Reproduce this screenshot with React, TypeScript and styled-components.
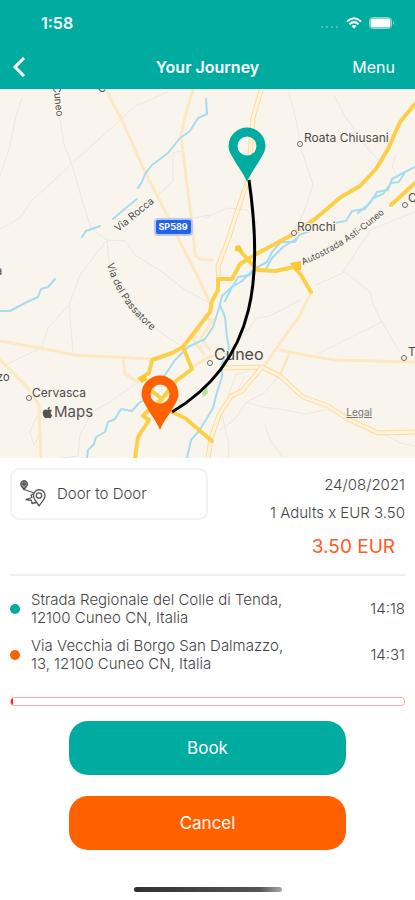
import React from "react";
import styled, { createGlobalStyle } from "styled-components";
import { FaApple } from "react-icons/fa";

const TEAL = "#00ac9f";
const ORANGE = "#ff6000";

const GlobalStyle = createGlobalStyle`
  *, *::before, *::after { box-sizing: border-box; }
  body {
    margin: 0;
    background: #fff;
    color: #444;
    font-family: Inter, "Liberation Sans", sans-serif;
  }
  button { font: inherit; border: 0; cursor: pointer; }
`;

const Screen = styled.div`
  display: flex;
  flex-direction: column;
  min-height: 100vh;
`;

const Header = styled.header`
  background: ${TEAL};
  color: #fff;
`;

const StatusBar = styled.div`
  display: flex;
  align-items: center;
  justify-content: space-between;
  height: 45px;
  padding: 0 20px 0 41px;
`;

const Clock = styled.time`
  font-size: 16px;
  line-height: 20px;
  font-weight: 600;
`;

const StatusIcons = styled.div`
  display: flex;
  align-items: center;
  gap: 7px;
`;

const NavBar = styled.nav`
  display: grid;
  grid-template-columns: 1fr auto 1fr;
  align-items: center;
  height: 44px;
  padding: 0 12px;
`;

const Title = styled.h1`
  margin: 0;
  font-size: 16px;
  line-height: 24px;
  font-weight: 600;
`;

const NavButton = styled.button<{ $end?: boolean }>`
  display: flex;
  justify-self: ${(p) => (p.$end ? "end" : "start")};
  padding: ${(p) => (p.$end ? "0 8px" : "0")};
  background: none;
  color: #fff;
  font-size: 16px;
  line-height: 24px;
`;

const MapArea = styled.section`
  position: relative;
  display: flex;
  flex: 1 0 320px;
  overflow: hidden;
  background: #f9f5ed;
`;

const MapCanvas = styled.svg`
  position: absolute;
  inset: 0;
  width: 100%;
  height: 100%;

  text {
    font-family: Inter, "Liberation Sans", sans-serif;
    fill: #4c4a48;
    stroke: #f9f5ed;
    stroke-width: 2px;
    paint-order: stroke;
  }
`;

const MapBrand = styled.div`
  position: absolute;
  left: 41px;
  bottom: 37px;
  display: flex;
  align-items: center;
  font-size: 15px;
  line-height: 18px;
  color: #555350;
`;

const LegalLink = styled.a`
  position: absolute;
  right: 43px;
  bottom: 40px;
  font-size: 10px;
  line-height: 12px;
  color: #777470;
`;

const Details = styled.main`
  display: flex;
  flex-direction: column;
  padding: 10px 10px 0;
`;

const Summary = styled.div`
  display: grid;
  grid-template-columns: 1fr 1fr;
  align-items: start;
  padding-bottom: 13px;
  border-bottom: 2px solid #efefef;
`;

const ServiceCard = styled.div`
  display: flex;
  align-items: center;
  gap: 10px;
  height: 52px;
  padding: 0 8px;
  border: 2px solid #f2f2f2;
  border-radius: 9px;
  font-size: 15px;
  line-height: 20px;
  font-weight: 300;
`;

const Fare = styled.div`
  display: flex;
  flex-direction: column;
  align-items: flex-end;
  padding-top: 3px;
  font-size: 15px;
  line-height: 28px;
  font-weight: 300;
`;

const Price = styled.strong`
  margin-top: 6px;
  padding-right: 10px;
  font-size: 19px;
  line-height: 28px;
  font-weight: 400;
  color: #ff5a1f;
`;

const Stops = styled.ul`
  display: flex;
  flex-direction: column;
  gap: 10px;
  margin: 0;
  padding: 15px 0 0;
  list-style: none;
`;

const Stop = styled.li`
  display: grid;
  grid-template-columns: 11px 1fr auto;
  align-items: center;
  gap: 10px;
  font-size: 15px;
  line-height: 18px;
  font-weight: 300;
`;

const Dot = styled.span<{ $color: string }>`
  width: 10px;
  height: 10px;
  border-radius: 50%;
  background: ${(p) => p.$color};
`;

const Track = styled.div`
  height: 9px;
  margin-top: 24px;
  border: 1px solid #ffa9a2;
  border-radius: 4px;
  overflow: hidden;
`;

const Fill = styled.div`
  width: 2px;
  height: 100%;
  background: #f0281e;
`;

const Actions = styled.div`
  display: flex;
  flex-direction: column;
  align-items: center;
  gap: 21px;
  padding-top: 15px;
`;

const ActionButton = styled.button<{ $color: string }>`
  width: 70%;
  height: 54px;
  border-radius: 19px;
  background: ${(p) => p.$color};
  color: #fff;
  font-size: 17px;
  line-height: 24px;
`;

const HomeIndicator = styled.div`
  align-self: center;
  width: 148px;
  height: 5px;
  margin: 37px 0 8px;
  border-radius: 3px;
  background: linear-gradient(90deg, #303030, #555 85%, #aaa);
`;

const Road = styled.path<{ $kind: "lane" | "pale" | "main" | "water" }>`
  fill: none;
  stroke-linejoin: round;
  stroke-linecap: round;
  stroke: ${(p) => ({ lane: "#ebe7e1", pale: "#fce8c2", main: "#fbd048", water: "#a5dcf0" })[p.$kind]};
  stroke-width: ${(p) => ({ lane: 1, pale: 3, main: 4, water: 2 })[p.$kind]};
`;

const lanes = [
  "M22 98 L16 116 L10 145 L0 176",
  "M59 113 L64 144 L73 168 L82 200 L91 228 L107 240 L110 270",
  "M168 92 L135 106 L118 122 L70 165 L60 175 L32 200 L20 218 L0 229",
  "M107 240 L80 275 L69 305 L73 351 M69 305 L48 328 L41 348 L5 365",
  "M107 240 L125 241 L135 255 L162 272 L185 290 L210 303",
  "M181 151 L173 153 L173 181 L159 194 M193 218 L210 215",
  "M289 92 L296 120 L302 152 L313 185 L303 214 L290 235",
  "M335 97 L344 115 L365 145 L378 160 M396 155 L392 166 L398 178",
  "M205 218 L228 208 L247 210 L257 224",
  "M415 212 L370 230 L355 254 L343 272",
  "M300 300 L270 316 L257 318 L240 340 L222 356",
  "M316 285 L345 272 L370 292 L374 307 L382 322 L400 352",
  "M382 322 L355 335 L317 354",
  "M220 430 L234 420 L247 402 L262 407 L280 409 L305 414 L325 410",
  "M247 402 L264 393 L278 377 M234 398 L245 376 M265 425 L270 440 L282 456",
  "M222 415 L229 445 L228 458 M385 434 L400 443 L415 446",
  "M123 365 L127 376 L138 383 M150 325 L178 344",
  "M135 384 L110 402 L92 412 L80 435 L78 456 L62 458",
  "M38 414 L30 432 L34 445 L41 432",
  "M218 425 L236 374 L250 371",
];

const paleRoads = [
  "M107 92 L122 120 L145 172 L168 217 L180 242 L197 275 L210 303",
  "M193 90 L186 113 L181 135 L187 185 L193 230 L195 255 L200 259 L212 260",
  "M0 341 L40 348 L75 355 L150 359",
  "M0 360 L28 388 L39 405 L41 458",
  "M311 292 L300 315 L280 343 L262 369",
  "M280 350 L310 356 L335 360 L415 362 M289 354 L280 375",
  "M123 360 L125 374 L138 382",
  "M206 315 L193 340 L204 354 M204 318 L213 320 L201 338 L210 350 M192 368 L205 359 L222 352",
];

const casedRoads = [
  "M261 90 L253 118 L248 180 L237 212 L228 240 L218 266 L219 279",
  "M219 368 L262 367 L280 376 L303 397 L328 406 L348 419 L378 433 L415 432",
  "M262 367 L242 391 L231 396 L219 415 L211 438 L208 458",
];

const mainRoads = [
  "M415 104 L400 122 L388 149 L376 169 L360 186 L341 197 L315 219 L290 236 L258 253 L240 264 L232 279 L218 279 L218 290 L212 301 L210 312 L183 347 L172 353 L152 360 L149 373 L141 378",
  "M415 183 L391 205",
  "M238 248 L248 260 L258 270 L275 271 L294 267 L301 275 L311 292",
  "M183 347 L192 369 L176 381 L162 399 L148 411 L143 416 L149 420 L138 437 L135 458",
  "M148 388 L162 399 M172 412 L185 418 L212 441",
];

const rivers = [
  "M206 99 L207 114 L198 118 L190 131 L180 138 L168 153 L152 165 L145 174 L142 182 L138 188",
  "M137 199 L127 207 L113 219 M82 237 L86 231 L100 226",
  "M0 311 L10 311 L25 303 L38 297 L41 289 L48 287 L55 279",
  "M415 167 L405 172 L399 182 L391 183 L383 194 L373 198 L365 209 L352 211 L346 221 L334 223",
  "M405 172 L392 179 L388 190 L377 192 L370 203 L358 213",
  "M310 231 L299 235 L295 242 L281 242 L272 252 L267 262 L256 268 L250 275 L238 277 L233 286 L222 296 L219 308 L213 327 L205 339 L188 347 L175 360 L165 375 L156 384 L148 398 L139 403 L132 411 L121 409 L115 419 L108 422 L105 432 L96 437 L94 444 L88 450 L87 458",
  "M296 239 L283 247 L272 258 L266 269 L252 271 L242 281 L232 287 L225 301",
  "M220 305 L225 317 L227 337 L229 348 L222 364 L222 377 L217 392 L213 408 L207 418 L199 431 L191 440 L187 458",
];

const places = [
  { x: 300, y: 144, label: "Roata Chiusani", tx: 304, ty: 142, size: 12 },
  { x: 294, y: 233, label: "Ronchi", tx: 297, ty: 231, size: 12 },
  { x: 405, y: 205, label: "C", tx: 408, ty: 202, size: 12 },
  { x: 404, y: 358, label: "T", tx: 408, ty: 356, size: 12 },
  { x: 29, y: 398, label: "Cervasca", tx: 32, ty: 397, size: 12 },
  { x: 210, y: 363, label: "Cuneo", tx: 214, ty: 360, size: 16 },
];

function Pin({ x, y, color }: { x: number; y: number; color: string }) {
  return (
    <path
      transform={`translate(${x} ${y})`}
      fill={color}
      fillRule="evenodd"
      d="M0 36 C-3 28 -9 21 -14 12 C-17 7 -18.500 4 -18.500 0 A18.500 18.500 0 0 1 18.500 0 C18.500 4 17 7 14 12 C9 21 3 28 0 36 Z M0 -9.500 A9.500 9.500 0 1 0 0 9.500 A9.500 9.500 0 1 0 0 -9.500 Z"
    />
  );
}

function JourneyMap() {
  return (
    <MapCanvas viewBox="0 89 415 369" preserveAspectRatio="xMidYMid slice" role="img" aria-label="Route map of Cuneo">
      {lanes.map((d) => <Road key={d} $kind="lane" d={d} />)}
      {paleRoads.map((d) => <Road key={d} $kind="pale" d={d} />)}
      {casedRoads.map((d) => (
        <g key={d} fill="none" strokeLinejoin="round">
          <path d={d} stroke="#fadba0" strokeWidth="5" />
          <path d={d} stroke="#fdf3dc" strokeWidth="3" />
        </g>
      ))}
      <path d="M202 393 L207 386 L208 393 L203 397 Z" fill="#b9e0a0" />
      {rivers.map((d) => <Road key={d} $kind="water" d={d} />)}
      {mainRoads.map((d) => <Road key={d} $kind="main" d={d} />)}
      <path d="M137 378 L146 375 L147 380 L142 383 Z M235 246 L240 245 L243 252 L235 251 Z M290 263 L301 261 L301 270 L294 270 Z" fill="#fbc92f" />

      {places.map((p) => (
        <g key={p.label}>
          <circle cx={p.x} cy={p.y} r="2.500" fill="#f9f5ed" stroke="#6d6b68" />
          <text x={p.tx} y={p.ty} fontSize={p.size}>{p.label}</text>
        </g>
      ))}
      <text x="-3" y="381" fontSize="11">zo</text>
      <text x="-4" y="275" fontSize="11">a</text>
      <text x="98" y="92" fontSize="11">C</text>
      <text fontSize="10" transform="translate(53 86) rotate(83)">Cuneo</text>
      <text fontSize="10" transform="translate(118 232) rotate(-39)">Via Rocca</text>
      <path id="passatore" d="M107 264 Q116 300 150 329" fill="none" />
      <text fontSize="10"><textPath href="#passatore">Via del Passatore</textPath></text>
      <path id="autostrada" d="M303 265 Q355 244 398 200" fill="none" />
      <text fontSize="9"><textPath href="#autostrada">Autostrada Asti-Cuneo</textPath></text>

      <rect x="155" y="219" width="37" height="16" rx="3" fill="#2262e8" stroke="#b6c8f6" strokeWidth="2" />
      <text x="173" y="230" textAnchor="middle" fontSize="9" fontWeight="700" style={{ fill: "#fff", stroke: "none" }}>SP589</text>

      <path d="M249 180 C262 270 260 360 172 412" fill="none" stroke="#000" strokeWidth="3" />
      <Pin x={247} y={146} color={TEAL} />
      <Pin x={160} y={394} color={ORANGE} />
    </MapCanvas>
  );
}

function BackIcon() {
  return (
    <svg width="14" height="20" viewBox="0 0 14 20" fill="none" stroke="#fff" strokeWidth="3" aria-hidden="true">
      <path d="M12 1 L3 10 L12 19" />
    </svg>
  );
}

function SignalIcon() {
  return (
    <svg width="19" height="12" viewBox="0 0 19 12" fill="#62c8c0" aria-hidden="true">
      <circle cx="2" cy="10" r="1" />
      <circle cx="7" cy="10" r="1" />
      <circle cx="12" cy="10" r="1" />
      <circle cx="17" cy="10" r="1" />
    </svg>
  );
}

function WifiIcon() {
  return (
    <svg width="16" height="12" viewBox="0 0 16 12" fill="none" stroke="#fff" strokeWidth="2" aria-hidden="true">
      <path d="M1 4.500 Q8 -2 15 4.500" />
      <path d="M3.500 7.200 Q8 3 12.500 7.200" />
      <path d="M5.500 9 Q8 7 10.500 9 L8 11.800 Z" fill="#fff" stroke="none" />
    </svg>
  );
}

function BatteryIcon() {
  return (
    <svg width="26" height="12" viewBox="0 0 26 12" aria-hidden="true">
      <rect x="0.500" y="0.500" width="22" height="11" rx="3" fill="none" stroke="#8ad7d1" />
      <rect x="1.500" y="1.500" width="20" height="9" rx="2" fill="#fff" />
      <path d="M24 4 Q26 6 24 8 Z" fill="#8ad7d1" />
    </svg>
  );
}

function RouteIcon() {
  return (
    <svg width="27" height="28" viewBox="0 0 27 28" fill="none" stroke="#555" strokeWidth="1.300" strokeLinejoin="round" strokeLinecap="round" aria-hidden="true">
      <path d="M4 9.500 L1.500 6 A3.200 3.200 0 1 1 6.700 6 Z" fill="#999" />
      <circle cx="4.100" cy="4" r="1" />
      <path d="M4 9.500 L13 12.500 M13 14 L11 15 L12 17.500 L6 19.500 L11.500 20.500 L12 23.500 L16 22.500" />
      <path d="M19 26 C18 23 13.500 20 13.500 15.500 A5.700 5.700 0 0 1 25 15.500 C25 20 20.500 23 19 26 Z" />
      <circle cx="19" cy="15.500" r="2.700" />
    </svg>
  );
}

const stops = [
  { color: TEAL, lines: ["Strada Regionale del Colle di Tenda,", "12100 Cuneo CN, Italia"], time: "14:18" },
  { color: ORANGE, lines: ["Via Vecchia di Borgo San Dalmazzo,", "13, 12100 Cuneo CN, Italia"], time: "14:31" },
];

export default function App() {
  return (
    <Screen>
      <GlobalStyle />
      <Header>
        <StatusBar>
          <Clock>1:58</Clock>
          <StatusIcons>
            <SignalIcon />
            <WifiIcon />
            <BatteryIcon />
          </StatusIcons>
        </StatusBar>
        <NavBar>
          <NavButton type="button" aria-label="Back"><BackIcon /></NavButton>
          <Title>Your Journey</Title>
          <NavButton type="button" $end>Menu</NavButton>
        </NavBar>
      </Header>

      <MapArea>
        <JourneyMap />
        <MapBrand><FaApple size={13} aria-hidden="true" />Maps</MapBrand>
        <LegalLink href="#legal">Legal</LegalLink>
      </MapArea>

      <Details>
        <Summary>
          <ServiceCard><RouteIcon />Door to Door</ServiceCard>
          <Fare>
            <span>24/08/2021</span>
            <span>1 Adults x EUR 3.50</span>
            <Price>3.50 EUR</Price>
          </Fare>
        </Summary>
        <Stops>
          {stops.map((s) => (
            <Stop key={s.time}>
              <Dot $color={s.color} />
              <span>{s.lines[0]}<br />{s.lines[1]}</span>
              <time>{s.time}</time>
            </Stop>
          ))}
        </Stops>
        <Track role="progressbar" aria-label="Booking time" aria-valuenow={1} aria-valuemin={0} aria-valuemax={100}>
          <Fill />
        </Track>
        <Actions>
          <ActionButton type="button" $color={TEAL}>Book</ActionButton>
          <ActionButton type="button" $color={ORANGE}>Cancel</ActionButton>
        </Actions>
        <HomeIndicator />
      </Details>
    </Screen>
  );
}
